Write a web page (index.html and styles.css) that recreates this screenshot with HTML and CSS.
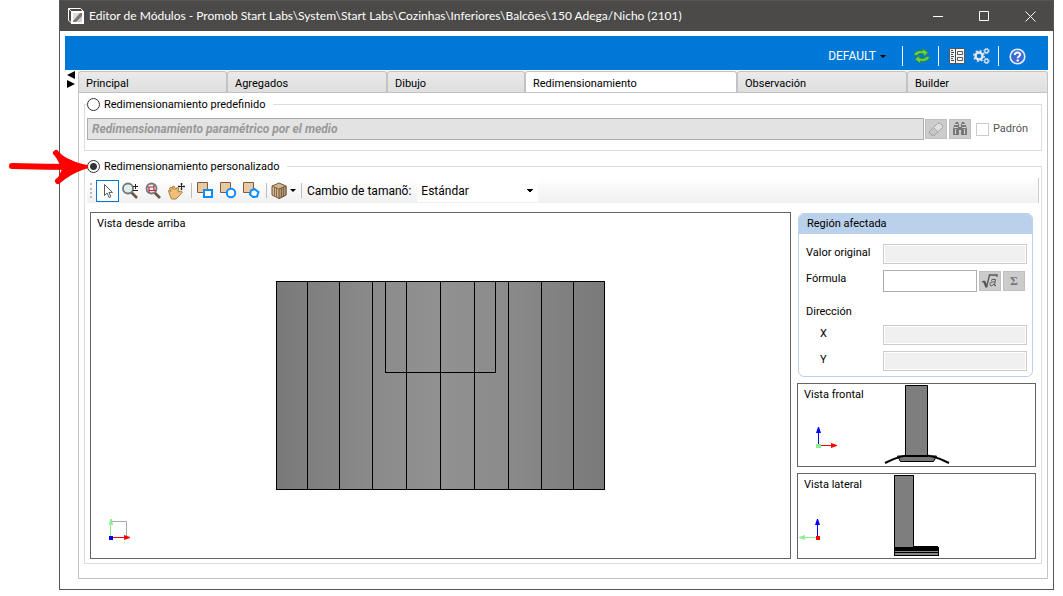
FILE: index.html
```html
<!DOCTYPE html>
<html lang="es">
<head>
  <meta charset="UTF-8">
  <meta name="viewport" content="width=device-width, initial-scale=1">
  <title>Editor de Módulos</title>
  <link rel="stylesheet" href="styles.css">
</head>
<body>
  <main class="window">
    <header class="titlebar">
      <svg class="app-icon" width="16" height="16" viewBox="0 0 16 16">
        <path fill="#4b4a48" stroke="#fff" d="M.5.500h12l3 3v12h-11l-4-3z"/>
        <path fill="#fff" d="M3 3h13v13H3z"/>
        <path fill="#777" d="M5 5h9v9H5z"/>
        <path fill="#ddd" d="M5 5h7l-7 8z"/>
        <path fill="#ccc" d="M14 8v6H8z"/>
        <path stroke="#fff" d="m.5.500 3 3"/>
      </svg>
      <h1>Editor de Módulos - Promob Start Labs\System\Start Labs\Cozinhas\Inferiores\Balcões\150 Adega/Nicho (2101)</h1>
      <div class="window-buttons">
        <button type="button" aria-label="Minimizar"><svg width="11" height="11"><path d="M0 5.500h10"/></svg></button>
        <button type="button" aria-label="Maximizar"><svg width="11" height="11"><path d="M.5.500h9v9h-9z"/></svg></button>
        <button type="button" aria-label="Cerrar"><svg width="11" height="11"><path d="M.5.500l10 10M10.500.500l-10 10"/></svg></button>
      </div>
    </header>

    <div class="window-body">
      <!-- Blue bar -->
      <div class="topbar">
        <button type="button" class="profile">DEFAULT <span class="caret"></span></button>
        <span class="bar-sep"></span>
        <button type="button" aria-label="Actualizar">
          <svg width="17" height="16" viewBox="0 0 17 16">
            <path fill="#6fd044" stroke="#2c8a1c" stroke-width=".8" d="M1 7.500C1.500 3.500 5 2 9.500 3L9.500.5 15 4.500 11 8.500l-.3-2.500C8 5 5 5.500 4 7.500z"/>
            <path fill="#6fd044" stroke="#2c8a1c" stroke-width=".8" d="M16.500 8.500c-.5 4-4.500 5.500-9 4.500v2.500L2 11.500l4-4 .5 2.500c3 1 6 .5 7-1.500z"/>
          </svg>
        </button>
        <span class="bar-sep"></span>
        <button type="button" aria-label="Formulario">
          <svg width="16" height="16" viewBox="0 0 16 16">
            <path fill="#f4f4f4" stroke="#555" d="M.5.500h15v15H.5z"/>
            <path stroke="#444" d="M6.500 1v14M2 2.500h2M2 4.500h3M2 6.500h2M2 8.500h3M2 10.500h2M2 12.500h3"/>
            <path fill="#fff" stroke="#555" d="M8.500 3.500h5v3h-5zM8.500 9.500h5v3h-5z"/>
          </svg>
        </button>
        <button type="button" aria-label="Configuración">
          <svg width="17" height="16" viewBox="0 0 17 16" fill="none" stroke="#e8e8e8">
            <circle cx="6" cy="8" r="3.500" stroke-width="2.400"/>
            <circle cx="6" cy="8" r="5.200" stroke-width="1.500" stroke-dasharray="2 2.080"/>
            <circle cx="13.500" cy="3" r="1.800" stroke-width="1.300"/>
            <circle cx="13.500" cy="3" r="2.700" stroke-dasharray="1 1.120"/>
            <circle cx="13.500" cy="13" r="1.800" stroke-width="1.300"/>
            <circle cx="13.500" cy="13" r="2.700" stroke-dasharray="1 1.120"/>
          </svg>
        </button>
        <span class="bar-sep"></span>
        <button type="button" aria-label="Ayuda">
          <svg width="17" height="17" viewBox="0 0 17 17">
            <circle cx="8.500" cy="8.500" r="7.300" fill="#3c6bd6" stroke="#e6ecfa" stroke-width="1.600"/>
            <path fill="none" stroke="#fff" stroke-width="2" d="M5.800 7c0-3.500 5.400-3.300 5.400-.4 0 1.600-2.500 1.700-2.500 3.700"/>
            <circle cx="8.700" cy="12.500" r="1.200" fill="#fff"/>
          </svg>
        </button>
      </div>

      <div class="workspace">
        <div class="scroll-arrows">
          <svg width="9" height="18"><path d="M8 0v8L0 4zM0 9v8l8-4z"/></svg>
        </div>

        <div class="tab-area">
          <nav class="tabs" role="tablist">
            <button type="button" role="tab">Principal</button>
            <button type="button" role="tab">Agregados</button>
            <button type="button" role="tab">Dibujo</button>
            <button type="button" role="tab" class="active" aria-selected="true">Redimensionamiento</button>
            <button type="button" role="tab">Observación</button>
            <button type="button" role="tab">Builder</button>
          </nav>

          <section class="tab-panel">
            <fieldset class="group">
              <legend>
                <label><input type="radio" name="resize" value="predefined"> Redimensionamiento predefinido</label>
              </legend>
              <div class="preset-row">
                <input type="text" class="preset-name" aria-label="Redimensionamiento" value="Redimensionamiento paramétrico por el medio" disabled>
                <button type="button" class="small-btn" aria-label="Borrar" disabled>
                  <svg width="16" height="16" viewBox="0 0 16 16">
                    <path fill="#e0e0e0" stroke="#a4a4a4" d="M1.500 10.500 9.500 2.500q1.500-1 3.500.5t1.500 3.500l-8 7.500q-1.500 1-3.500-.5t-1.500-3z"/>
                    <path fill="#c8c8c8" stroke="#a4a4a4" d="m5.500 6.500 4.500 4.500-3.500 3q-1.500 1-3.500-.5t-1.500-3z"/>
                  </svg>
                </button>
                <button type="button" class="small-btn" aria-label="Buscar" disabled>
                  <svg width="16" height="16" viewBox="0 0 16 16">
                    <path fill="#777" d="M4 1h2l1 3v2h2V4l1-3h2l2 4 1 3v6H9V9H7v5H1V8l1-3z"/>
                    <path stroke="#d4d4d4" d="M3 3.500h3M10 3.500h3M2 6.500h4M10 6.500h4M3.500 8v5M12.500 8v5"/>
                  </svg>
                </button>
                <label class="default-check"><input type="checkbox" disabled> Padrón</label>
              </div>
            </fieldset>

            <fieldset class="group custom">
              <legend>
                <label><input type="radio" name="resize" value="custom" checked> Redimensionamiento personalizado</label>
                <svg class="pointer-arrow" width="80" height="38" viewBox="0 0 80 38">
                  <path d="M4 18q34 1 70 1M48 5q8 10 26 14-12 4-24 14"/>
                  <path class="head" d="m45 4 6 11 4 4-7 15 31-15z"/>
                </svg>
              </legend>

              <div class="toolbar">
                <span class="grip"></span>
                <button type="button" class="tool selected" aria-label="Seleccionar">
                  <svg width="16" height="16" viewBox="0 0 16 16"><path fill="#fff" stroke="#555" d="M4.500 1.500v11l2.600-2.400 2 4.400 1.800-.8-2-4.300h3.600z"/></svg>
                </button>
                <button type="button" class="tool" aria-label="Zoom">
                  <svg width="18" height="18" viewBox="0 0 18 18">
                    <path stroke="#6b5440" stroke-width="2.600" d="m9 10 6 6"/>
                    <circle cx="6" cy="6.500" r="5" fill="#dfeeee" stroke="#777" stroke-width="1.800"/>
                    <path stroke="#222" d="M11 4.500h5M13.500 2v5M11 8.500h5"/>
                  </svg>
                </button>
                <button type="button" class="tool" aria-label="Zoom de ventana">
                  <svg width="18" height="18" viewBox="0 0 18 18">
                    <path stroke="#6b5440" stroke-width="2.600" d="m9 10 6 6"/>
                    <circle cx="6.500" cy="6.500" r="5" fill="#e6eeee" stroke="#777" stroke-width="1.800"/>
                    <path fill="none" stroke="#c0273a" stroke-width="1.200" d="M4 5h5v3.500H4zM2.500 5H4M9 8.500h2M9 3v2M4 8.500v2"/>
                  </svg>
                </button>
                <button type="button" class="tool" aria-label="Mover vista">
                  <svg width="18" height="18" viewBox="0 0 18 18">
                    <path fill="#eec077" stroke="#9a6a22" stroke-width=".8" d="M1 8l2 1.500L1.500 6 3 5l2 2.500L4.500 4.500 6 4l2 3.500L9 5.500l1.500.5-.3 4 3-1 1.300 1-3.500 4L8 17H3.500L2 13.500.5 9z"/>
                    <path stroke="#222" d="M10 4.500h7M13.500 1v7M12.500 2h2M12.500 7h2M11 3.500v2M16 3.500v2"/>
                  </svg>
                </button>
                <span class="tool-sep"></span>
                <button type="button" class="tool" aria-label="Rectángulo">
                  <svg width="17" height="17" viewBox="0 0 17 17"><path fill="#e8c9a2" stroke="#7d5c40" d="M.5.500h10v10H.5z"/><path fill="#fff" stroke="#0a8cff" stroke-width="2" d="M7 8h8v7H7z"/></svg>
                </button>
                <button type="button" class="tool" aria-label="Círculo">
                  <svg width="17" height="17" viewBox="0 0 17 17"><path fill="#e8c9a2" stroke="#7d5c40" d="M.5.500h10v10H.5z"/><circle cx="11" cy="11" r="4.200" fill="#fff" stroke="#0a8cff" stroke-width="2"/></svg>
                </button>
                <button type="button" class="tool" aria-label="Polígono">
                  <svg width="17" height="17" viewBox="0 0 17 17"><path fill="#e8c9a2" stroke="#7d5c40" d="M.5.500h10v10H.5z"/><path fill="#fff" stroke="#0a8cff" stroke-width="2" d="m11.500 7 4 3-1.500 4.500-4 .5-3-2.500 1-4z"/></svg>
                </button>
                <span class="tool-sep"></span>
                <button type="button" class="tool wide" aria-label="Modo de visualización">
                  <svg width="16" height="17" viewBox="0 0 16 17">
                    <path fill="#d3b58c" stroke="#6f5942" d="M8 1l7 3v9l-7 3.500L1 13V4z"/>
                    <path fill="#b8966e" stroke="#6f5942" d="M8 7l7-3v9l-7 3.500z"/>
                    <path fill="none" stroke="#6f5942" stroke-width=".8" d="M1 4l7 3M3.500 5v9M5.500 6v9M10.500 6v9M12.500 5v9"/>
                  </svg>
                  <span class="caret"></span>
                </button>
                <span class="tool-sep"></span>
                <label for="sizeMode">Cambio de tamanõ:</label>
                <select id="sizeMode">
                  <option>Estándar</option>
                </select>
              </div>

              <div class="views">
                <div class="view">
                  <h2>Vista desde arriba</h2>
                  <svg class="model" width="329" height="209" shape-rendering="crispEdges">
                    <defs>
                      <linearGradient id="shade">
                        <stop offset="0" stop-color="#797979"/>
                        <stop offset=".3" stop-color="#8b8b8b"/>
                        <stop offset=".5" stop-color="#919191"/>
                        <stop offset=".7" stop-color="#8b8b8b"/>
                        <stop offset="1" stop-color="#797979"/>
                      </linearGradient>
                    </defs>
                    <path fill="url(#shade)" stroke="#000" d="M.5.500h328v208H.5z"/>
                    <path fill="none" stroke="#000" d="M31.500 0v209M63.500 0v209M96.500 0v209M130.500 0v209M164.500 0v209M198.500 0v209M232.500 0v209M265.500 0v209M297.500 0v209M109.500 0v91.500h110V0"/>
                  </svg>
                  <svg class="axes" width="40" height="40">
                    <path fill="none" stroke="#aaa" d="M19.500 3.500h16v16"/>
                    <path stroke="#90ee90" d="M19.500 3v16"/>
                    <path fill="#90ee90" d="M19 1h2l1 6h-4z"/>
                    <path stroke="red" d="M19 19.500h17"/>
                    <path fill="red" d="M33 17v5l6-2v-1z"/>
                    <path fill="#00f" d="M18 18h4v4h-4z"/>
                  </svg>
                </div>

                <div class="side">
                  <section class="region">
                    <h2>Región afectada</h2>
                    <div class="fields">
                      <label for="original">Valor original</label>
                      <input type="text" id="original" disabled>
                      <label for="formula">Fórmula</label>
                      <div class="formula-row">
                        <input type="text" id="formula">
                        <button type="button" class="small-btn" aria-label="Editor de fórmula">
                          <svg width="18" height="16" viewBox="0 0 18 16" fill="none" stroke="#555">
                            <path stroke-width="1.200" d="m1 9 2-1"/><path stroke-width="2.400" d="m3 8 2.500 6"/><path stroke-width="1.300" d="M5.500 14.500 8.500 2H16v2"/>
                            <path d="M10 7.500q1.500-2 4.500-1l-1 5.500q0 1.500 1.500.500M13.500 9q-5-.5-4.500 2.500t4-.5"/>
                          </svg>
                        </button>
                        <button type="button" class="small-btn sigma" aria-label="Sumatoria" disabled>Σ</button>
                      </div>
                      <span class="direction">Dirección</span>
                      <label for="dirX" class="axis-name">X</label>
                      <input type="text" id="dirX" disabled>
                      <label for="dirY" class="axis-name">Y</label>
                      <input type="text" id="dirY" disabled>
                    </div>
                  </section>

                  <div class="view">
                    <h2>Vista frontal</h2>
                    <svg class="model" width="66" height="80">
                      <path fill="#777" stroke="#000" d="M13.500 71h39l-3 5.500h-33z"/>
                      <path fill="none" stroke="#000" stroke-width="2" d="M1 78q32-17 64 0"/>
                      <path fill="#7e7e7e" stroke="#000" d="M21.500.500h22v70h-22z"/>
                      <path stroke="#000" stroke-width="2" d="M22 71h22"/>
                    </svg>
                    <svg class="axes" width="40" height="40">
                      <path stroke="#00f" d="M20.500 4v16"/>
                      <path fill="#00f" d="M20 1h1l2 6h-5z"/>
                      <path stroke="red" d="M21 19.500h14"/>
                      <path fill="red" d="M33 17v5l6-2v-1z"/>
                      <path fill="#90ee90" d="M18 18h5v4h-5z"/>
                    </svg>
                  </div>

                  <div class="view">
                    <h2>Vista lateral</h2>
                    <svg class="model" width="46" height="82" shape-rendering="crispEdges">
                      <path fill="#7e7e7e" stroke="#000" d="M.5.500h19v72H.5z"/>
                      <path fill="#888" stroke="#000" d="M.5 72.500h44v8H.5z"/>
                      <path d="M0 72h45v4H0zM20 71h24v2H20zM0 77h45v1H0z"/>
                    </svg>
                    <svg class="axes" width="40" height="40">
                      <path stroke="#00f" d="M19.500 4v16"/>
                      <path fill="#00f" d="M19 1h1l2 6h-5z"/>
                      <path stroke="#90ee90" d="M4 19.500h15"/>
                      <path fill="#90ee90" d="M7 17v5l-6-2v-1z"/>
                      <path fill="red" d="M18 18h4v4h-4z"/>
                    </svg>
                  </div>
                </div>
              </div>
            </fieldset>
          </section>
        </div>
      </div>
    </div>
  </main>
</body>
</html>
```

FILE: styles.css
```css
* {
  box-sizing: border-box;
}
body {
  margin: 0;
  padding: 0 9px 6px 59px;
  min-height: 100vh;
  display: flex;
  background-color: #fff;
  color: #000;
  font-family: Roboto, "Liberation Sans", sans-serif;
  font-size: 11px;
  line-height: 14px;
}
button, input, select {
  font: inherit;
  color: inherit;
}
button {
  display: flex;
  align-items: center;
  justify-content: center;
  padding: 0;
  border: 0;
  background: none;
}
svg {
  display: block;
  flex: none;
}
h1, h2 {
  margin: 0;
  font-size: inherit;
  font-weight: normal;
}

/* Window frame */
.window {
  flex: 1;
  display: flex;
  flex-direction: column;
  border: 1px solid #555;
}
.titlebar {
  display: flex;
  align-items: center;
  height: 30px;
  padding-left: 8px;
  background-color: #4b4a48;
  color: #fff;
  font-family: Lato, Roboto, sans-serif;
  font-size: 12px;
}
.titlebar h1 {
  flex: 1;
  margin-left: 5px;
  white-space: nowrap;
}
.window-buttons {
  display: flex;
}
.window-buttons button {
  width: 46px;
  height: 30px;
}
.window-buttons path {
  fill: none;
  stroke: #fff;
}
.window-body {
  flex: 1;
  display: flex;
  flex-direction: column;
  padding: 5px 5px 10px;
}

/* Blue bar */
.topbar {
  display: flex;
  align-items: center;
  justify-content: flex-end;
  gap: 8px;
  height: 34px;
  padding: 6px 22px 0 0;
  background-color: #0078d7;
}
.profile {
  gap: 4px;
  margin-right: 8px;
  color: #fff;
  font-size: 12px;
}
.profile .caret {
  color: #000;
}
.caret {
  border: 3px solid transparent;
  border-top-color: currentColor;
  border-bottom: 0;
}
.bar-sep {
  width: 1px;
  height: 20px;
  margin-right: 2px;
  background-color: #fff;
}

/* Tabs */
.workspace {
  flex: 1;
  display: flex;
}
.scroll-arrows {
  width: 13px;
  padding: 1px 0 0 2px;
}
.tab-area {
  flex: 1;
  display: flex;
  flex-direction: column;
  padding-top: 1px;
}
.tabs {
  display: grid;
  grid-template-columns: 149fr 160fr 138fr 212fr 170fr 141fr;
}
.tabs button {
  justify-content: flex-start;
  height: 21px;
  padding: 3px 0 0 7px;
  border: 1px solid #c3c3c3;
  border-bottom: 0;
  border-radius: 3px 3px 0 0;
  background: linear-gradient(#ebebeb, #dedede);
}
.tabs .active {
  background: #fff;
}
.tab-panel {
  flex: 1;
  display: flex;
  flex-direction: column;
  padding: 4px 5px 14px;
  border: 1px solid #c3c3c3;
}

/* Groups */
.group {
  min-width: 0;
  margin: 0;
  padding: 6px 2px 10px;
  border: 1px solid #dcdcdc;
}
.group legend {
  position: relative;
  height: 15px;
  padding: 0 8px 0 0;
}
.group legend label {
  display: flex;
  align-items: center;
  gap: 4px;
}
input[type="radio"] {
  appearance: none;
  width: 13px;
  height: 13px;
  margin: 1px 0;
  border: 1px solid #333;
  border-radius: 50%;
  background-color: #fff;
}
input[type="radio"]:checked {
  background: radial-gradient(circle, #333 3px, #fff 4px);
}
.preset-row {
  display: flex;
  align-items: center;
  gap: 2px;
}
.preset-name {
  flex: 1;
  height: 22px;
  margin-right: -1px;
  padding: 0 4px;
  border: 1px solid #abadb3;
  background-color: #e3e3e3;
  color: #999;
  font-size: 12px;
  font-style: italic;
  font-weight: bold;
}
.small-btn {
  width: 22px;
  height: 20px;
  border: 1px solid #bfbfbf;
  background-color: #ccc;
}
.default-check {
  display: flex;
  align-items: center;
  gap: 4px;
  padding: 0 11px 0 3px;
  color: #555;
}
input[type="checkbox"] {
  appearance: none;
  width: 13px;
  height: 13px;
  margin: 0;
  border: 1px solid #ccc;
  background-color: #fff;
}
.custom {
  flex: 1;
  display: flex;
  flex-direction: column;
  margin-top: 8px;
  padding: 4px 2px;
}

/* Red hand drawn arrow, points at the selected option */
.pointer-arrow {
  position: absolute;
  top: -11px;
  left: -79px;
  fill: none;
  stroke: red;
  stroke-width: 6px;
  stroke-linecap: round;
}
.pointer-arrow .head {
  fill: red;
  stroke: none;
}

/* Toolbar */
.toolbar {
  display: flex;
  align-items: center;
  height: 25px;
  padding-left: 3px;
  border-right: 1px solid #ccc;
  background: linear-gradient(#fff, #f0f0f0);
  font-size: 12px;
}
.grip {
  height: 15px;
  margin-right: 4px;
  border-left: 2px dotted #bbb;
}
.tool {
  width: 23px;
  height: 22px;
}
.tool.selected {
  border: 1px solid #0078d7;
  background-color: #fff;
}
.tool.wide {
  width: 29px;
  gap: 3px;
}
.tool-sep {
  width: 1px;
  height: 15px;
  margin: 0 2px 0 3px;
  background-color: #bdbdbd;
}
.toolbar label {
  margin: 0 6px 0 3px;
}
.toolbar select {
  appearance: none;
  width: 121px;
  height: 23px;
  padding: 0 4px;
  border: 0;
  border-radius: 0;
  background: linear-gradient(#000, #000) 110px 10px / 6px 1px no-repeat,
    linear-gradient(#000, #000) 111px 11px / 4px 1px no-repeat,
    linear-gradient(#000, #000) 112px 12px / 2px 1px no-repeat,
    #fff;
}

/* Model views */
.views {
  flex: 1;
  display: flex;
  gap: 6px;
  padding: 9px 3px 0;
}
.view {
  flex: auto;
  display: grid;
  border: 1px solid #646464;
}
.view > * {
  grid-area: 1 / 1;
}
.view h2 {
  padding: 4px 6px;
}
.view .model {
  place-self: center;
}
.view .axes {
  place-self: end start;
}
.side {
  flex: none;
  width: 239px;
  display: flex;
  flex-direction: column;
  gap: 6px;
}

/* Affected region */
.region {
  margin: 1px 3px 0 1px;
  border: 1px solid #b9d1ea;
  border-radius: 6px;
}
.region h2 {
  padding: 3px 8px;
  border-radius: 5px 5px 0 0;
  background-color: #b9d1ea;
}
.fields {
  display: grid;
  grid-template-columns: 77px 1fr;
  row-gap: 6px;
  padding: 10px 5px 5px 7px;
}
.fields label {
  padding-top: 2px;
}
.fields input {
  width: 100%;
  min-width: 0;
  height: 20px;
  border: 1px solid #ccc;
  background-color: #f0f0f0;
  box-shadow: inset 0 0 0 1px #fff;
}
.fields .formula-row {
  display: flex;
  align-items: center;
  gap: 2px;
  padding-right: 2px;
}
.fields #formula {
  height: 22px;
  border-color: #abadb3;
  background-color: #fff;
}
.formula-row .small-btn {
  flex: none;
}
.sigma {
  color: #777;
  font-family: "Liberation Serif", serif;
  font-size: 12px;
  font-weight: bold;
}
.direction {
  grid-column: 1 / -1;
  padding-top: 7px;
}
.axis-name {
  padding-left: 14px;
}
```
